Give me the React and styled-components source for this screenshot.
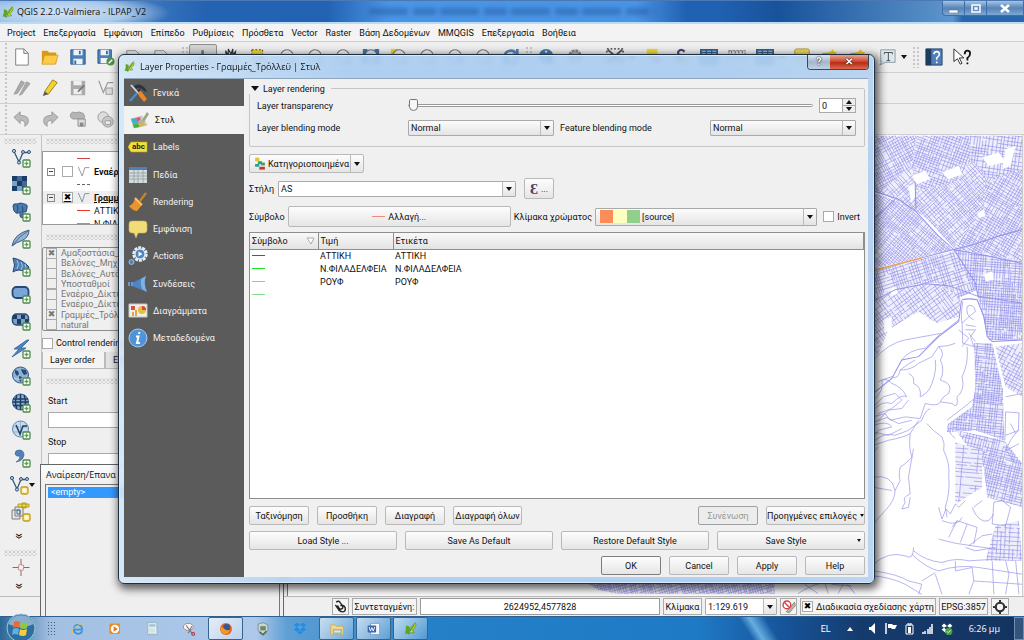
import React, { useState } from "react"
import styled, { createGlobalStyle, css } from "styled-components"

const GlobalStyle = createGlobalStyle`
* { box-sizing: border-box; }
body {
    margin: 0;
    overflow: hidden;
    font-family: Roboto, "Noto Sans", sans-serif;
    font-size: 9px;
    line-height: 12px;
    color: #111;
}
button, input, select, table {
    font: inherit;
    color: inherit;
}
button {
    padding: 0;
    border: 0;
    background: none;
}
ul {
    margin: 0;
    padding: 0;
    list-style: none;
}
svg { display: block; }
`

/* ---------- icons ---------- */

const Icon = ({ size = 20, children }) => (
    <svg width={size} height={size} viewBox="0 0 20 20" fill="none" aria-hidden="true">{children}</svg>
)

const Plus = () => <g>
    <rect x="12" y="12" width="7" height="7" rx="1" fill="#fff" stroke="#4c8a48" strokeWidth="1.3" />
    <path d="M15.5 13.5v4M13.5 15.5h4" stroke="#5f9c58" strokeWidth="1.3" />
</g>

const Star = () => <g>
    <rect x="12" y="12" width="7" height="7" rx="1.5" fill="#ffe98a" stroke="#c39a1c" strokeWidth="1.3" />
    <path d="M15.5 13.2v4.6M13.2 15.5h4.6M14 14l3 3M17 14l-3 3" stroke="#fff" strokeWidth=".8" />
</g>

const VShape = ({ color = "#31557c" }) => <g>
    <path d="M3 3.5L8 14L12 4.5H17" stroke={color} strokeWidth="1.3" />
    <circle cx="3" cy="3" r="1.6" fill="#b7d0e8" stroke={color} />
    <circle cx="8" cy="14.500" r="1.6" fill="#b7d0e8" stroke={color} />
    <circle cx="12" cy="4" r="1.5" fill="#b7d0e8" stroke={color} />
    <circle cx="18" cy="4" r="1.5" fill="#b7d0e8" stroke={color} />
</g>

const Globe = () => <circle cx="9.500" cy="9" r="8" fill="#8fb1d3" stroke="#345b86" />

const layerIcons = {
    vector: <><VShape /><Plus /></>,
    raster: <>
        <rect x="1" y="1" width="15" height="15" fill="#7ba2cb" />
        <path d="M1 1h5v5H1zM11 1h5v5h-5zM6 6h5v5H6zM1 11h5v5H1zM11 11h5v5h-5z" fill="#1f3d63" />
        <path d="M6 1h5v5H6zM11 6h5v5h-5z" fill="#3f6b9c" /><Plus />
    </>,
    postgis: <>
        <path d="M2 4Q2 1 6 2Q10 0 13 2Q17 2 16 6L15 10H12L12 15Q10 17 9 14V10Q7 12 5 11Q2 9 2 4Z" fill="#4b7cb1" stroke="#264b77" />
        <path d="M6 3Q8 6 6 10M11 4Q13 7 11 10" stroke="#264b77" /><Plus />
    </>,
    spatialite: <>
        <path d="M1 17Q3 5 18 1Q18 9 10 12Q6 13 1 17Z" fill="#93b4d3" stroke="#3e5f83" />
        <path d="M2 16Q8 7 17 2" stroke="#3e5f83" strokeWidth=".8" /><Plus />
    </>,
    mssql: <>
        <path d="M2 1Q12 3 18 10Q17 14 14 15Q8 11 2 15Q5 8 2 1Z" fill="#4c80b8" stroke="#22456f" />
        <path d="M6 3Q9 8 6 12M10 5Q13 9 10 13M14 7Q16 11 14 14" stroke="#c3d7ea" strokeWidth=".8" /><Plus />
    </>,
    oracle: <><rect x="1.500" y="3" width="16" height="11" rx="4" fill="#79a6d6" stroke="#274a75" strokeWidth="1.800" /><Plus /></>,
    georaster: <>
        <rect x="1.500" y="3" width="16" height="11" rx="4" fill="#7ba2cb" stroke="#274a75" strokeWidth="1.500" />
        <path d="M2 4h4v4H2zM10 4h4v4h-4zM6 8h4v5H6zM14 8h3v4h-3z" fill="#1f3d63" /><Plus />
    </>,
    anywhere: <><path d="M16 1L3 10H8L1 18L15 9H10L18 1Z" fill="#4d85c1" stroke="#315f94" strokeWidth=".8" /><Plus /></>,
    wms: <>
        <Globe />
        <path d="M4 4l3 1 1 3-2 2-2-3zM10 3l5 1 1 4-3 1-2-3zM8 10l3 1-1 5-2-2z" fill="#244a76" />
        <path d="M3 12q6 3 13-1" stroke="#d6e4f1" strokeWidth=".8" /><Plus />
    </>,
    wcs: <>
        <Globe />
        <path d="M2 6h15M1.500 9h16M2 12.500h15M9.500 1v16M6 2Q3 9 6 16M13 2Q16 9 13 16" stroke="#1f3d63" strokeWidth="1.500" /><Plus />
    </>,
    wfs: <>
        <circle cx="9.500" cy="9" r="8" fill="#c9dcec" stroke="#5f84ad" />
        <path d="M2 7h15M2 12h15M9.500 1v16" stroke="#8aa9c9" strokeWidth=".8" />
        <path d="M5 5L9 14L12 6H16" stroke="#1f3d63" strokeWidth="1.500" /><Plus />
    </>,
    csv: <><path d="M8 2Q4 2 4 6Q5 9 9 8Q9 12 5 14Q12 13 13 7Q13 2 8 2Z" fill="#5282b5" stroke="#315f94" strokeWidth=".6" /><Plus /></>,
    newLayer: <><VShape /><Star /></>,
    bookmark: <>
        <path d="M1 8h8v9H1zM4 5h8v9H4z" fill="#e6e6e6" stroke="#7c7c7c" />
        <path d="M6 8h3v4H6z" stroke="#3c6c9c" />
        <path d="M7 2h11v3H7zM11 1h4v5h-4z" fill="#f6dc3e" stroke="#a48d18" strokeWidth=".8" /><Star />
    </>,
}

const QLogo = ({ size = 12 }) => <Icon size={size}>
    <path d="M3 6Q8 5 9 9L7 19Q3 17 1 18Q4 12 3 6Z" fill="#5ba529" />
    <path d="M7 19Q8 9 17 1Q20 5 17 9L13 12L16 16L12 17Q10 14 7 19Z" fill="#b8d62c" stroke="#3d7c1f" strokeWidth=".8" />
    <path d="M9 14L16 4" stroke="#266916" />
</Icon>

const Lens = ({ color = "#777", fill = "#f4f4f4" }) => <>
    <circle cx="10" cy="9" r="7" fill={fill} stroke={color} strokeWidth="1.2" />
    <path d="M15 14l4 4" stroke={color} strokeWidth="2" />
</>

const fileIcons = {
    blank: <path d="M3 1h9l5 5v13H3zM12 1v5h5" fill="#fff" stroke="#777" />,
    open: <><path d="M1 3h6l2 2h8v12H1z" fill="#d99a16" /><path d="M4 8h15l-3 10H1z" fill="#fdcb48" stroke="#cf9722" strokeWidth=".8" /></>,
    save: <>
        <path d="M2 2h16v16H2z" fill="#4d7fb9" stroke="#315a8c" />
        <path d="M5 2h10v6H5zM5 12h10v6H5z" fill="#eef3f8" /><path d="M12 3v4M7 14v4" stroke="#39679e" strokeWidth="2" />
    </>,
    saveAs: <>
        <path d="M1 2h15v15H1z" fill="#4d7fb9" stroke="#315a8c" />
        <path d="M4 2h9v6H4zM4 11h9v6H4z" fill="#eef3f8" /><path d="M11 3v4" stroke="#39679e" strokeWidth="2" />
        <circle cx="15" cy="15" r="4.500" fill="#4f9445" /><path d="M13 17l4-4" stroke="#fff" strokeWidth="1.500" />
    </>,
    print: <path d="M2 3h10l4 4v12H2zM6 9h10v6H6z" fill="#eee" stroke="#888" />,
    touch: <path d="M8 10V3q2-2 3 0v7l5 1-2 8H8l-4-6z" fill="#777" />,
    hand: <path d="M4 14L2 9l3 1-1-7 3 5V1l3 6 2-6v7l3-4-1 8 3-2-5 9H7z" fill="#fff" stroke="#333" strokeWidth="1.300" />,
    panSel: <><rect x="2" y="2" width="12" height="9" fill="#f5db2e" stroke="#333" strokeDasharray="2" /><path d="M10 8l8 8M3 13l8 5" stroke="#444" strokeWidth="2" /></>,
    zoom: <Lens />,
    zoomFull: <><path d="M1 1h5v16H1zM14 1h5v16h-5z" fill="#47729f" /><Lens color="#47729f" fill="#dfe7ee" /></>,
    zoomSel: <><path d="M1 1h8v7H1z" fill="#f1d31f" /><Lens /></>,
    zoomBlue: <><Lens /><path d="M12 9h6v6h-6z" fill="#77a2cf" /></>,
    refresh: <path d="M3 10Q3 3 10 3Q14 3 15 6M17 10Q17 17 10 17Q6 17 5 14M17 1v7h-6M3 19v-7h6" stroke="#4f83bb" strokeWidth="3" />,
    info: <><circle cx="9" cy="9" r="8" fill="#447ab2" /><path d="M9 3v2M9 7v7" stroke="#fff" strokeWidth="2" /><path d="M12 12l5 5" stroke="#444" strokeWidth="2" /></>,
    gear: <circle cx="10" cy="9" r="6" fill="#bbb" stroke="#888" strokeWidth="3" strokeDasharray="3 1" />,
    select: <><path d="M2 2l16 14M18 2L2 16" stroke="#555" strokeWidth="2" /><path d="M1 1h18v14H1z" stroke="#333" strokeDasharray="2" strokeWidth="1.500" /></>,
    yellow: <><path d="M3 1h12v11H3z" fill="#f2d932" /><path d="M11 10h7v6h-7z" fill="#d0679a" /></>,
    epsilon: <><path d="M14 4Q10 0 7 4Q6 8 10 8Q4 9 6 13Q10 16 14 12" stroke="#594474" strokeWidth="2.500" /><circle cx="15" cy="14" r="4" fill="#e6d63e" /></>,
    table: <><path d="M1 2h18v15H1z" fill="#bcd0e2" stroke="#34618f" strokeWidth="2" /><path d="M1 5h18M7 2v15M13 2v15M1 11h18" stroke="#34618f" strokeWidth="1.500" /></>,
    ruler: <path d="M1 3h18v9H1zM4 3v4M8 3v4M12 3v4M16 3v4" stroke="#777" strokeWidth="1.200" strokeDasharray="3 1" />,
    tip: <path d="M2 3q0-2 2-2h12q2 0 2 2v8q0 2-2 2h-6l-4 5v-5H4q-2 0-2-2z" fill="#efd75a" stroke="#a9963c" />,
    bookmark: <><path d="M2 6h14v9H2z" fill="#ece8d8" stroke="#999" /><path d="M13 1l1 3 4 1-3 3 1 4-3-2-4 2 1-4-3-3 4-1z" fill="#edc81f" /></>,
    text: <><path d="M3 2h16v14H8l-6 3 2-4H3z" fill="#dbe8ef" stroke="#8898a0" /><path d="M7 5h9M7 5v2M16 5v2M11.500 5v9M9.500 14h4" stroke="#444" /></>,
    help: <><path d="M1 1h18v18H1z" fill="#4f7fb8" stroke="#203f66" /><path d="M1 1h6v18H1z" fill="#1e3b60" /><path d="M10 7q0-3 3-3t3 3q0 2-3 4v2M13 15v2" stroke="#fff" strokeWidth="1.800" /></>,
    whatsThis: <><path d="M1 1v14l4-3 3 6 2-1-3-6h5z" fill="#fff" stroke="#222" /><path d="M13 7q0-4 3-4t3 3-3 5v3M16 16v2" stroke="#111" strokeWidth="2" /></>,
}

const greyIcons = {
    pens: <><path d="M1 17L9 2l4 2L5 16zM7 18L15 3l4 2L10 17z" fill="#aaa" stroke="#8a8a8a" strokeWidth=".6" /></>,
    pencil: <><path d="M4 14L13 1l5 3L8 17z" fill="#f4d22e" stroke="#907a1d" /><path d="M4 14l-2 5 6-2z" fill="#555" /></>,
    saveEdit: <><path d="M2 2h16v16H2z" fill="#aaa" /><path d="M5 2h9v5H5zM5 11h9v6H5z" fill="#eee" /><path d="M10 14l7-7" stroke="#777" strokeWidth="2" /></>,
    feature: <><path d="M2 2l5 13 5-11h6" stroke="#999" strokeWidth="1.300" /><rect x="10" y="10" width="7" height="7" fill="#ddd" stroke="#999" /></>,
    undo: <path d="M1 8l7-6v4q10 0 9 7 0 3-4 5 2-6-5-7v4z" fill="#bbb" stroke="#999" />,
    redo: <path d="M19 8l-7-6v4Q2 6 3 13q0 3 4 5-2-6 5-7v4z" fill="#bbb" stroke="#999" />,
    blob: <><path d="M2 4q2-3 5-1 5-2 9 1 3 4 0 6H4Q0 8 2 4z" fill="#b5b5b5" stroke="#999" /><path d="M10 10h8v8h-8z" fill="#ddd" stroke="#888" /><path d="M12 14h4v4h-4z" fill="#888" /></>,
    rings: <><circle cx="7" cy="8" r="6" fill="#ddd" stroke="#999" /><circle cx="12" cy="13" r="6" fill="#c9c9c9" stroke="#999" /><path d="M9 12h6v4H9z" fill="#eee" stroke="#999" /></>,
}

const sideIcons = {
    general: <>
        <path d="M6 3Q11 -1 17 5L19 9L16 8Q12 3 8 6z" fill="#29343e" /><path d="M12 6L3 17" stroke="#29343e" strokeWidth="2" />
        <path d="M3 2l8 9" stroke="#cfd9e0" strokeWidth="1.800" /><path d="M10 9l3-1 6 8-3 3-5-6z" fill="#ee8423" />
        <path d="M9 10L2 18" stroke="#4a90cf" strokeWidth="2.500" />
    </>,
    style: <>
        <path d="M1 9l11-3 5 9-13 3z" fill="#dcd3c6" stroke="#b7b1a5" strokeWidth=".6" />
        <path d="M1 9l5-1 2 5-5 1z" fill="#3bb3c9" /><path d="M6 8l4-1 2 5-4 1z" fill="#d95776" />
        <path d="M3 14l5-1 2 4-6 1z" fill="#4bb04b" /><path d="M8 13l5-1 3 3-6 2z" fill="#d9b93c" />
        <path d="M12 10l5-8 2 2-5 8z" fill="#98a883" /><path d="M10 9l5 3-3 3-4-3z" fill="#b3b39f" />
    </>,
    labels: <><path d="M0 10l3-5h16v10H3z" fill="#f3e03a" stroke="#b9a716" strokeWidth=".6" /></>,
    fields: <><path d="M1 2h18v16H1z" fill="#d5dbdb" /><path d="M1 2h18v3H1z" fill="#4f7fb8" /><path d="M1 8h18M1 11h18M1 14h18M6 5v13M10 5v13M15 5v13" stroke="#8f9ea1" strokeWidth=".8" /></>,
    rendering: <><path d="M12 9l6-8" stroke="#c98328" strokeWidth="2.200" /><path d="M7 6l7 7-5 6q-4 0-8-5 5-2 6-8z" fill="#e9952e" /><path d="M7 6l7 7" stroke="#fbc06b" strokeWidth="2" /></>,
    display: <path d="M1 5q0-3 3-3h12q3 0 3 3v6q0 3-3 3h-6l-2 5-2-5H4q-3 0-3-3z" fill="#f1dd78" stroke="#c9b654" strokeWidth=".6" />,
    actions: <>
        <circle cx="12" cy="8" r="6.500" fill="#4f86c0" stroke="#e8edf1" strokeWidth="2.500" strokeDasharray="3 1" />
        <circle cx="12" cy="8" r="5" fill="#4f86c0" stroke="#fff" /><path d="M10.500 5.500l4 2.500-4 2.500z" fill="#fff" />
        <circle cx="3.500" cy="16" r="2.500" fill="#4f86c0" stroke="#9dbbd9" />
    </>,
    joins: <><path d="M4 9L18 2Q15 9 19 18L4 12z" fill="#4a86c6" /><path d="M13 5l5-3Q15 9 19 18l-5-3Q12 10 13 5z" fill="#7fb0e0" /><path d="M0 8h2v4H0zM3 8h2v4H3z" fill="#5f9bd8" /></>,
    diagrams: <>
        <path d="M1 3h18v13H1z" fill="#eeeeea" stroke="#c7c7c3" /><path d="M3 5h4v4H3z" fill="#db5141" />
        <path d="M4 11h2v4H4zM7 9h2v6H7z" fill="#e8a43f" /><circle cx="14" cy="9" r="4" fill="#e2c13e" /><path d="M14 9V5a4 4 0 0 1 4 4z" fill="#d64a3e" />
    </>,
    metadata: <><circle cx="10" cy="10" r="9" fill="#4f93d8" stroke="#a8cdf0" /><path d="M11.500 4l-.5 2M8 8.500h2.500L9 15h3" stroke="#fff" strokeWidth="2" /></>,
}

const trayIcons = {
    ie: <><path d="M16 13q-2 4-6 4-6-1-6-7 1-6 6-6 6 1 6 7H5" stroke="#3794de" strokeWidth="2.600" /><path d="M2 16Q0 11 8 6q8-5 10-3" stroke="#f0c13b" strokeWidth="1.300" /></>,
    media: <><rect x="2" y="2" width="15" height="15" rx="2" fill="#e98c20" /><circle cx="10" cy="10" r="6" fill="#fff" /><path d="M8 6l6 4-6 4z" fill="#e57a10" /></>,
    calc: <><path d="M4 1h13v17H4z" fill="#e9f3f4" stroke="#87a9b5" /><path d="M6 3h9v4H6z" fill="#a8c9cf" /><path d="M6 10h9M6 13h9M6 16h9" stroke="#9ab4bc" strokeDasharray="2 1" /></>,
    snip: <><ellipse cx="9" cy="7" rx="7" ry="5" fill="#f6f6f6" stroke="#c35a55" /><path d="M6 5l9 12M14 6L9 16" stroke="#677" strokeWidth="1.500" /><circle cx="16" cy="17" r="2" stroke="#b33" strokeWidth="1.500" /></>,
    firefox: <><circle cx="10" cy="10" r="8.500" fill="#e0661b" /><circle cx="11" cy="8" r="5" fill="#31599c" /><path d="M2 7q4 0 6 3 3 3 8 1-2 6-8 6T2 7z" fill="#f39a24" /></>,
    shield: <><path d="M3 3l7-2 7 3v7q-2 6-7 8-5-2-7-8z" fill="#cfd6cf" stroke="#6f7d74" /><path d="M6 6h8v6H6z" fill="#5f8f6d" /><path d="M5 14l5 4 5-5" stroke="#4f6657" strokeWidth="2" /></>,
    dropbox: <path d="M6 1l4 3-5 3-4-3zM14 1l5 3-4 3-5-3zM5 7l5 4-4 3-5-3zM15 7l4 4-5 3-4-3zM10 12l4 3-4 3-4-3z" fill="#258be0" />,
    folder: <><path d="M1 4h6l2 2h10v12H1z" fill="#f3d985" stroke="#c5a551" /><path d="M4 10h13v8H4z" fill="#8cb8dd" /><path d="M6 12h9v3H6z" fill="#f7e5a5" /></>,
    word: <><path d="M5 2h13v16H5z" fill="#f3f7fb" stroke="#6d8fba" /><rect x="1" y="5" width="12" height="10" rx="1" fill="#3765ac" /><path d="M3 7l2 6 2-5 2 5 2-6" stroke="#fff" strokeWidth="1.300" /></>,
}

/* ---------- main window ---------- */

const Window = styled.div`
position: relative;
display: flex;
flex-direction: column;
height: 100vh;
background: #efefef;
`

const TitleBar = styled.header`
display: flex;
align-items: center;
height: 24px;
padding-left: 2px;
font-family: "Open Sans", sans-serif;
border-top: 1px solid #4b79b4;
border-bottom: 2px solid #b8dcf8;
background:
    radial-gradient(ellipse 110px 20px at 60px 12px, #d3e4f4 0, #a9c9ea 60%, transparent 100%),
    linear-gradient(90deg, transparent 32%, #4a94e6 38%, #4a94e6 62%, transparent 67%),
    linear-gradient(90deg, #79a9d9 0, #2463b2 20%, #2161b3 70%, #18529a 76%, #5e95cc 93%, #2a66ab 94%);
`

const WindowTitle = styled.h1`
flex: 1;
margin: 0 0 0 3px;
font-size: 9px;
font-weight: 400;
`

const GhostTitle = styled.div`
position: absolute;
left: 36%;
top: 8px;
width: 28%;
height: 7px;
background: repeating-linear-gradient(90deg, #245a9e 0 38px, transparent 40px 43px, #245a9e 45px 66px, transparent 68px 71px);
filter: blur(2px);
opacity: .5;
`

const WindowButtons = styled.div`
display: flex;
align-self: flex-start;
height: 15px;
border: 1px solid #3f6fa5;
border-top: 0;
border-right: 0;
border-radius: 0 0 0 4px;
background: linear-gradient(#a7c5e4, #5784b6 50%, #7ca8d5);
`

const WindowButton = styled.button`
display: grid;
place-items: center;
width: ${props => props.$wide ? 37 : 22}px;
border-right: 1px solid #3f6fa5;
`

const MenuBar = styled.nav`
display: flex;
align-items: center;
gap: 8px;
height: 18px;
padding-left: 7px;
background: #f3f3f3;
border-bottom: 1px solid #cfcfcf;
`

const MenuItem = styled.button`
white-space: nowrap;
`

const ToolBar = styled.div`
display: flex;
align-items: center;
height: 31px;
padding-left: 8px;
border-bottom: 1px solid #cfcfcf;
background: radial-gradient(circle, #c6c6c6 1px, transparent 1px) 4px 0 / 4px 4px repeat-y, #efefef;
`

const ToolButton = styled.button`
display: grid;
flex: none;
place-items: center;
width: 28px;
height: 26px;
border-radius: 2px;
${props => props.$pressed && css`
background: #d4d4d4;
border: 1px solid #8f8f8f;
`}
`

const Spacer = styled.span`
flex: none;
width: ${props => props.$w}px;
`

const Filler = styled.span`
flex: 1;
`

const Grip = styled.span`
flex: none;
width: 8px;
height: 22px;
background: radial-gradient(circle, #c6c6c6 1px, transparent 1px) 0 0 / 4px 4px;
`

const Caret = styled.span`
flex: none;
align-self: center;
justify-self: center;
border: ${props => props.$s || 3}px solid transparent;
border-top: ${props => props.$s ? props.$s + 1 : 4}px solid #111;
border-bottom: 0;
`

const HandleRow = styled.div`
flex: none;
align-self: stretch;
height: 6px;
margin: ${props => props.$m || "0 4px"};
background: radial-gradient(circle, #cdcdcd 1px, transparent 1px) 0 0 / 4px 4px, radial-gradient(circle, #dcdcdc 1px, transparent 1px) 2px 2px / 4px 4px;
`

const Workspace = styled.div`
display: flex;
flex: 1;
min-height: 0;
`

const LayerTools = styled.div`
display: flex;
flex: none;
flex-direction: column;
align-items: center;
width: 42px;
padding-top: 3px;
border-right: 1px solid #c2c2c2;
`

const LayerToolGrid = styled.div`
display: grid;
flex: none;
grid-auto-rows: 1fr;
height: 382px;
`

const LayerTool = styled.button`
display: flex;
align-items: center;
justify-content: center;
width: 40px;
`

const More = styled.button`
flex: none;
height: 20px;
font-size: 14px;
line-height: 10px;
transform: rotate(90deg);
`

const Docks = styled.div`
display: flex;
flex: none;
flex-direction: column;
width: 242px;
padding-top: 3px;
`

const LayerTree = styled.ul`
height: 74px;
overflow: hidden;
background: #fff;
border: 1px solid #999;
`

const TreeRow = styled.li`
display: flex;
align-items: center;
gap: 4px;
height: 13px;
padding-left: ${props => props.$leaf ? 25 : 4}px;
white-space: nowrap;
background: ${props => props.$active ? "#eee" : "none"};
font-weight: ${props => props.$leaf ? 400 : 700};
text-decoration: ${props => props.$active ? "underline" : "none"};
`

const Expander = styled.span`
display: grid;
place-items: center;
width: 8px;
height: 8px;
margin-right: 3px;
border: 1px solid #888;
&::after {
    content: "";
    width: 4px;
    height: 1px;
    background: #444;
}
`

const Line = styled.span`
flex: none;
width: 13px;
height: 1px;
background: ${props => props.$dashed
    ? `repeating-linear-gradient(90deg, ${props.$color} 0 3px, transparent 3px 5px)`
    : props.$color};
`

const Check = styled.input`
appearance: none;
flex: none;
display: grid;
place-items: center;
width: 11px;
height: 11px;
margin: 0;
border: 1px solid #aaa;
background: ${props => props.disabled ? "#eee" : "#fff"};
&:checked::after {
    content: "✖";
    font: 9px/9px "DejaVu Sans", sans-serif;
    color: ${props => props.disabled ? "#777" : "#000"};
}
`

const OrderList = styled.ul`
display: grid;
flex: none;
grid-auto-rows: 1fr;
height: 84px;
overflow: hidden;
border: 1px solid #8c8c8c;
border-radius: 2px;
color: #777;
padding-left: 3px;
`

const OrderLabel = styled.label`
display: flex;
align-items: center;
gap: 4px;
height: 10px;
font-size: 9px;
white-space: nowrap;
`

const ControlLabel = styled(OrderLabel)`
gap: 3px;
height: 12px;
margin-top: 6px;
`

const Tabs = styled.div`
display: flex;
flex: none;
height: 17px;
margin-top: 3px;
`

const Tab = styled.button`
padding: 0 9px 0 7px;
border: 1px solid #bbb;
border-top: 0;
background: ${props => props.$active ? "#f4f4f4" : "#e2e2e2"};
`

const Fields = styled.div`
display: flex;
flex-direction: column;
gap: 5px;
padding: 11px 8px 0 6px;
label + input { margin-bottom: 3px; }
`

const TextField = styled.input`
width: 100%;
height: 16px;
border: 1px solid #aaa;
background: #fff;
`

const UndoDock = styled.section`
position: absolute;
left: 40px;
top: 464px;
bottom: 24px;
display: flex;
flex-direction: column;
width: 244px;
padding: 3px 3px 0 4px;
border: 1px solid #666;
border-bottom: 0;
background: linear-gradient(#fafcfe, #efefef 20px);
`

const DockTitle = styled.h2`
margin: 0 0 3px 1px;
font: 400 9px/13px "Open Sans", sans-serif;
`

const UndoList = styled.ul`
flex: 1;
padding: 2px;
border: 1px solid #777;
border-bottom: 0;
li {
    height: 11px;
    padding-left: 3px;
    line-height: 11px;
    color: #fff;
    background: #3399ff;
}
`

const MapFrame = styled.main`
flex: 1;
min-width: 0;
margin: 0 1px 0 3px;
border-left: 1px solid #777;
border-right: 1px solid #ccc;
background: #fff;
svg {
    width: 100%;
    height: 100%;
}
`

const StatusBar = styled.footer`
display: flex;
flex: none;
align-items: center;
justify-content: flex-end;
gap: 3px;
height: 20px;
padding-right: 15px;
border-top: 1px solid #bbb;
`

const StatusBox = styled.div`
display: flex;
align-items: center;
justify-content: center;
flex: none;
gap: 4px;
width: ${props => props.$w ? props.$w + "px" : "auto"};
height: 17px;
padding: 0 1px;
border: 1px solid #aaa;
background: #f4f4f4;
white-space: nowrap;
`

const StatusButton = styled(StatusBox).attrs({ as: "button" })`
padding: 0;
`

const CoordField = styled.input`
flex: 0 1 240px;
height: 17px;
min-width: 0;
border: 1px solid #999;
text-align: center;
background: #fff;
`

const StatusCheck = styled.label`
display: flex;
align-items: center;
gap: 3px;
`

/* ---------- taskbar ---------- */

const TaskBar = styled.div`
display: flex;
flex: none;
align-items: center;
height: 24px;
padding-left: 47px;
color: #fff;
border-top: 1px solid #2f5f8f;
background:
    linear-gradient(58deg, transparent 72.5%, #67aee0 73.5%, transparent 75%),
    linear-gradient(90deg, #2c6797 0, #a3c0e2 5%, #adc8ea 25%, #5f9fd4 28%, #2580c8 42%, #1f7ac6 68%, #17569d 76%, #153b6d 84%, #14335f 100%);
`

const TaskGrip = styled.span`
width: 8px;
height: 16px;
margin-right: 5px;
background: radial-gradient(circle, #3c5f86 1px, transparent 1px) 0 0 / 3px 3px;
`

const StartOrb = styled.button`
position: absolute;
left: 6px;
bottom: 0;
width: 30px;
height: 27px;
`

const TaskButton = styled.button`
display: grid;
place-items: center;
width: 35px;
height: 23px;
margin-right: 2px;
border: 1px solid ${props => props.$open ? "#35648f" : "transparent"};
border-radius: 2px;
background: ${props => props.$open ? "linear-gradient(135deg, #ffffffb0, #ffffff30)" : "none"};
`

const Tray = styled.div`
display: flex;
align-items: center;
gap: 8px;
margin-left: auto;
font-size: 9px;
`

const Clock = styled.time`
margin: 0 6px 0 8px;
font: 9px/12px "Open Sans", sans-serif;
white-space: nowrap;
`

const ShowDesktop = styled.button`
width: 10px;
height: 23px;
border: 1px solid #6f8fb0;
background: #35547c;
`

/* ---------- dialog ---------- */

const Dialog = styled.section`
position: absolute;
left: 118px;
right: 149px;
top: 54px;
bottom: 56px;
display: flex;
flex-direction: column;
padding: 0 6px 6px 5px;
border: 1px solid #1f2f3f;
border-radius: 6px;
background: linear-gradient(90deg, #d3e6f8e6, #a9ccf0e6 30%, #a9ccf0e6 80%, #b4d1f0e6);
backdrop-filter: blur(2px);
box-shadow: inset 0 0 0 1px #d8eafc, 2px 3px 9px 2px #000000a0;
`

const DialogTitle = styled.header`
display: flex;
flex: none;
align-items: center;
gap: 5px;
height: 23px;
`

const DialogHeading = styled.h2`
flex: 1;
margin: 0;
font: 400 9px/14px "Open Sans", sans-serif;
`

const DialogControls = styled.div`
display: flex;
align-self: flex-start;
height: 15px;
margin-right: -1px;
border: 1px solid #3a4753;
border-top: 0;
border-radius: 0 0 4px 4px;
overflow: hidden;
`

const DialogControl = styled.button`
display: grid;
place-items: center;
width: ${props => props.$close ? 38 : 22}px;
font-weight: 700;
font-size: 10px;
color: #fff;
text-shadow: 0 0 2px #222, 0 0 1px #222;
background: ${props => props.$close
    ? "linear-gradient(#e6a497, #cf4a33 45%, #b92b14 55%, #dc6a4c)"
    : "linear-gradient(#d9e6f2, #a3b6c9 50%, #bfd3e8)"};
`

const DialogBody = styled.div`
display: flex;
flex: 1;
min-height: 0;
background: #f0f0f0;
border: solid #8fa5bb;
border-width: 1px 0 0;
`

const SideBar = styled.nav`
flex: none;
width: 120px;
background: #5b5b5b;
`

const SideList = styled.ul`
display: grid;
grid-auto-rows: 1fr;
height: 273px;
li { display: grid; }
`

const SideItem = styled.button`
display: flex;
align-items: center;
gap: 5px;
padding-left: ${props => props.$active ? 6 : 4}px;
color: ${props => props.$active ? "#222" : "#f2f2f2"};
background: ${props => props.$active ? "#f2f2f2" : "none"};
text-align: left;
`

const LabelsMark = styled.span`
display: grid;
position: relative;
b {
    position: absolute;
    left: 4px;
    top: 4px;
    font-size: 8px;
    line-height: 11px;
    color: #222;
}
`

const Content = styled.div`
display: flex;
flex: 1;
flex-direction: column;
min-width: 0;
padding: 4px 3px 2px 5px;
`

const Group = styled.fieldset`
min-width: 0;
height: 64px;
margin: 0;
padding: 4px 8px 0 7px;
border: 1px solid #c6c6c6;
border-radius: 2px;
legend {
    display: flex;
    align-items: center;
    gap: 4px;
    height: 11px;
    margin-left: -8px;
    padding: 0 6px 0 2px;
}
`

const GroupGrid = styled.div`
display: grid;
grid-template-columns: 151px 146px 156px 1fr;
align-items: center;
row-gap: 7px;
`

const FeatureLabel = styled.label`
padding-left: 6px;
white-space: nowrap;
`

const Slider = styled.input`
appearance: none;
width: 100%;
height: 14px;
margin: 0;
background: none;
&::-webkit-slider-runnable-track {
    height: 3px;
    border: 1px solid #999;
    border-radius: 2px;
    background: #fff;
}
&::-webkit-slider-thumb {
    appearance: none;
    width: 9px;
    height: 12px;
    margin-top: -6px;
    border: 1px solid #777;
    border-radius: 2px 2px 5px 5px;
    background: #f6f6f6;
}
`

const SliderCell = styled.div`
display: flex;
grid-column: 2 / 5;
align-items: center;
gap: 6px;
`

const Spin = styled.div`
display: flex;
flex: none;
width: 37px;
height: 15px;
border: 1px solid #aaa;
background: #fff;
input {
    flex: 1;
    min-width: 0;
    padding: 0 2px;
    border: 0;
    appearance: textfield;
}
input::-webkit-inner-spin-button { display: none; }
`

const SpinButtons = styled.div`
display: grid;
grid-template-rows: 1fr 1fr;
width: 13px;
border-left: 1px solid #aaa;
background: #eee;
button { display: grid; place-items: center; }
button:first-child { border-bottom: 1px solid #aaa; }
button:first-child span { transform: rotate(180deg); }
`

const Combo = styled.span`
display: flex;
flex: ${props => props.$w ? "0 0 " + props.$w + "px" : "1"};
min-width: 0;
height: ${props => props.$h || 16}px;
border: 1px solid #aaa;
border-radius: 1px;
background: ${props => props.$white ? "#fff" : "linear-gradient(#fcfcfc, #e4e4e4)"};
select {
    appearance: none;
    flex: 1;
    min-width: 0;
    padding: 0 2px;
    border: 0;
    background: none;
}
`

const ComboArrow = styled.span`
display: grid;
place-items: center;
width: 13px;
border-left: 1px solid #bbb;
background: linear-gradient(#fcfcfc, #e4e4e4);
pointer-events: none;
`

const Ramp = styled.span`
align-self: center;
flex: none;
width: 40px;
height: 13px;
margin-left: 4px;
background: linear-gradient(90deg, #fc8d59 0 33%, #ffffbf 33% 67%, #91cf8c 67%);
`

const Button = styled.button`
display: flex;
align-items: center;
justify-content: center;
gap: 3px;
flex: ${props => props.$w ? "0 0 " + props.$w + "px" : "1 1 0"};
height: ${props => props.$h || 19}px;
border: 1px solid ${props => props.$default ? "#7d7d7d" : "#b9b9b9"};
border-radius: 2px;
background: linear-gradient(#fdfdfd, #e5e5e5);
white-space: nowrap;
&:disabled {
    color: #999;
    background: #ececec;
    border-color: #a0a0a0;
}
`

const MenuButton = styled(Button)`
span:first-child { flex: 1; }
span:last-child { margin-right: 3px; }
`

const RendererButton = styled(Button)`
gap: 0;
> span:last-child {
    display: grid;
    place-items: center;
    align-self: stretch;
    width: 13px;
    border-left: 1px solid #bbb;
}
`

const RendererName = styled.span`
flex: 1;
`

const Row = styled.div`
display: flex;
align-items: center;
justify-content: ${props => props.$end ? "flex-end" : "flex-start"};
gap: ${props => props.$gap || 4}px;
margin-top: ${props => props.$mt || 7}px;
`

const SymbolRow = styled(Row)`
gap: 3px;
padding-right: 5px;
`

const FieldLabel = styled.label`
white-space: nowrap;
`

const Epsilon = styled.span`
font: 700 15px/14px "Liberation Serif", serif;
color: #4e3a66;
`

const TableFrame = styled.div`
flex: 1;
min-height: 0;
margin-top: 5px;
border: 1px solid #8e8e8e;
background: #fff;
`

const ClassTable = styled.table`
width: 100%;
border-collapse: collapse;
table-layout: fixed;
th {
    height: 16px;
    padding: 0 3px 0 2px;
    border: 1px solid #8e8e8e;
    border-width: 0 1px 1px 0;
    text-align: left;
    font-weight: 400;
    background: linear-gradient(#f8f8f8, #e3e3e3);
}
th:nth-child(1) { width: 68px; }
th:nth-child(2) { width: 75px; }
th div {
    display: flex;
    align-items: center;
    justify-content: space-between;
}
td {
    height: 13px;
    padding: 0 3px 0 2px;
    line-height: 12px;
}
td span { display: block; }
`

/* ---------- street map ---------- */

const seeded = seed => () => {
    seed = (seed * 16807) % 2147483647
    return seed / 2147483647
}

// broken parallel streets in two directions around the centre of a district
const streets = ({ cx, cy, r, angle, step, cross, seed }) => {
    const rand = seeded(seed)
    let d = ""
    ;[[angle, step], [angle + 90, cross]].forEach(([deg, gap]) => {
        const a = deg * Math.PI / 180
        const c = Math.cos(a)
        const s = Math.sin(a)
        for (let u = -r; u < r; u += gap * (0.7 + rand() * 0.6)) {
            let v = -r + rand() * 30
            while (v < r) {
                const len = 20 + rand() * 90
                if (rand() > 0.1) {
                    d += `M${Math.round(cx + v * c - u * s)} ${Math.round(cy + v * s + u * c)}L${Math.round(cx + (v + len) * c - u * s)} ${Math.round(cy + (v + len) * s + u * c)}`
                }
                v += len + rand() * 10
            }
        }
    })
    return d
}

const districts = [
    { area: "-20,20 175,20 160,110 120,180 60,190 -20,180", cx: 80, cy: 110, r: 170, angle: 62, step: 7, cross: 8, seed: 11 },
    { area: "175,20 330,20 340,90 290,160 170,185 160,110", cx: 250, cy: 100, r: 150, angle: 20, step: 8, cross: 9, seed: 23 },
    { area: "330,20 490,20 490,130 380,150 335,95", cx: 410, cy: 80, r: 130, angle: 8, step: 9, cross: 11, seed: 5 },
    { area: "60,190 160,110 175,185 290,160 340,95 390,150 375,240 285,355 200,265 150,230", cx: 230, cy: 230, r: 220, angle: 48, step: 7, cross: 9, seed: 37 },
    { area: "380,150 490,120 490,395 285,358 375,240", cx: 400, cy: 260, r: 180, angle: 30, step: 8, cross: 8, seed: 41 },
    { area: "-20,190 60,195 150,230 200,280 280,360 40,420 -20,430", cx: 120, cy: 320, r: 210, angle: 40, step: 7, cross: 7, seed: 53 },
    { area: "40,425 285,365 355,480 300,505 240,460 150,465 40,510", cx: 200, cy: 430, r: 190, angle: 72, step: 8, cross: 10, seed: 61 },
    { area: "40,510 150,467 240,463 305,505 300,560 235,580 180,545 90,600 60,670 40,685", cx: 160, cy: 560, r: 180, angle: 54, step: 9, cross: 12, seed: 73 },
    { area: "285,360 490,395 490,630 390,630 355,490", cx: 410, cy: 500, r: 160, angle: 4, step: 8, cross: 7, seed: 89 },
    { area: "345,640 400,640 432,780 436,930 350,900 265,905 270,880 340,830 350,770", cx: 370, cy: 770, r: 180, angle: 6, step: 7, cross: 8, seed: 97 },
    { area: "410,650 490,640 490,800 440,770", cx: 450, cy: 710, r: 100, angle: 28, step: 10, cross: 11, seed: 101 },
    { area: "290,900 436,930 490,1000 490,1130 385,1100 375,1010", cx: 410, cy: 1000, r: 140, angle: 14, step: 8, cross: 8, seed: 113 },
    { area: "290,935 370,960 370,1070 290,1120", cx: 330, cy: 1020, r: 100, angle: 5, step: 12, cross: 36, seed: 127 },
    { area: "410,1185 480,1170 490,1290 380,1290", cx: 440, cy: 1235, r: 80, angle: 3, step: 12, cross: 12, seed: 131 },
    { area: "-819,1350 -250,1350 -250,1388 -720,1388 -780,1375", cx: -530, cy: 1370, r: 300, angle: 74, step: 6, cross: 9, seed: 139 },
]

const parks = [
    "160,140 200,125 215,150 175,165", "370,85 420,70 440,100 390,110", "250,130 300,110 310,135 270,150",
    "150,170 170,165 172,200 158,220", "375,435 400,425 405,450 380,455", "75,570 100,560 100,600 78,610",
    "440,60 470,50 455,110 430,120", "355,250 375,240 380,260 362,265", "95,480 110,470 120,490 100,500",
]

const avenues = [
    "M45 185L120 210L170 245L240 320L285 360L350 460L358 500",
    "M45 422L190 385L285 360L380 378L490 402", "M45 515L110 480L200 462L270 468L358 500L490 520",
    "M170 160L172 240", "M45 270L110 210", "M285 360L345 345L420 320L490 300",
    "M310 510Q330 505 355 510L375 560L385 620L400 635L490 630",
    "M45 790L100 745L130 690L180 680L240 620L300 575L308 512",
]

const roads = [
    "M312 515Q305 560 310 580Q330 560 350 545Q345 520 325 530Q320 560 345 570M310 580L312 640L345 650L335 620L350 600L320 600",
    "M45 690Q90 640 140 630L250 610L300 570M130 690Q150 660 200 655L245 612",
    "M45 810Q80 780 70 750L100 740Q120 750 125 720Q150 700 170 690M125 720Q160 720 180 700L220 680L240 650Q270 650 290 640",
    "M240 650Q260 670 245 690Q260 720 245 750Q285 760 270 790Q250 800 245 815L280 820Q300 840 295 800Q320 780 310 740Q330 700 325 650",
    "M150 730Q170 740 165 760Q190 770 185 800Q210 790 220 760Q235 720 230 690",
    "M45 840Q70 810 100 820Q130 790 145 800Q130 770 100 760Q85 740 60 755M45 860L80 850L95 870L140 860L185 865L200 820Q240 830 245 815",
    "M45 885Q90 870 100 890L60 900L45 920M50 930Q80 905 110 915L150 900L190 870Q200 840 215 835",
    "M45 945L90 930Q140 920 155 910Q150 950 160 980L140 1000L125 1010Q120 1040 125 1050L110 1080",
    "M155 910L180 870M205 880Q220 900 250 920Q260 940 255 960Q275 1000 270 1040Q275 1080 260 1130L265 1160",
    "M45 965L60 950M45 1040Q100 1030 110 1080Q110 1110 80 1140L45 1180M45 1070L100 1080",
    "M165 955L150 1040L155 1090Q130 1100 140 1115L130 1135L150 1130L155 1100",
    "M240 1130L250 1165L262 1135L275 1150L290 1120L300 1130L320 1110",
    "M265 870L330 820Q345 800 370 805M270 880Q260 900 290 925",
    "M45 830L75 800L110 790L130 810L100 835L60 850M50 875L85 862L120 880L160 870M45 905L90 915L130 895M60 870L90 840L130 835L150 810",
    "M300 600L330 625L310 650M320 585L350 590M330 610L350 635",
    "M45 1300Q90 1260 140 1275Q165 1290 165 1250M160 1270Q200 1310 240 1320Q300 1300 360 1310L490 1330",
    "M45 1320Q120 1330 150 1350L190 1360L180 1390M165 1260Q200 1290 250 1295Q290 1280 330 1290L410 1285M45 1335Q100 1340 140 1360L190 1390",
    "M240 1225Q290 1240 340 1245L410 1255M270 1220L295 1170L355 1190L345 1240M295 1170L280 1190M325 1180L305 1235",
    "M340 1130Q360 1180 390 1170L405 1150M405 1115L400 1180L440 1185L455 1130L430 1110L405 1115M345 1130L370 1110",
    "M250 1170Q300 1190 310 1160M320 1250L350 1260L410 1250M330 1245L370 1215L400 1210",
    "M290 1290L290 1320L340 1310L345 1350L330 1390M400 1290L405 1390M440 1290L450 1330L440 1390M230 1330L250 1390M190 1350L230 1325M345 1350L490 1360M470 1290L480 1390",
    "M440 845L480 848L478 900Q450 930 442 960L470 1000M440 845L438 930M455 880L470 910M480 900L440 915M442 960L480 940M440 800L490 790",
    "M-180 1388Q-140 1360 -100 1355L-90 1388M-60 1388L-40 1350L-10 1388M-160 1360L-120 1388M-80 1360L-20 1365",
]

const StreetMap = () => (
    <svg viewBox="0 0 735 459" preserveAspectRatio="xMaxYMin slice" role="img" aria-label="Street map">
        <g transform="translate(572 -6) scale(.33333)" fill="none" stroke="#9391ea">
            {districts.map((d, i) => <g key={d.seed}>
                <clipPath id={`district${i}`}><polygon points={d.area} /></clipPath>
                <polygon points={d.area} fill="#eeeefc" stroke="none" />
                <path d={streets(d)} clipPath={`url(#district${i})`} strokeWidth="2" />
            </g>)}
            {parks.map(p => <polygon key={p} points={p} fill="#fff" stroke="none" />)}
            {avenues.map(p => <path key={p} d={p} strokeWidth="3" />)}
            {roads.map(p => <path key={p} d={p} strokeWidth="2" strokeLinejoin="round" />)}
            <path d="M30 427L190 385" stroke="#f2a13c" strokeWidth="4" />
        </g>
    </svg>
)

/* ---------- content ---------- */

const menus = ["Project", "Επεξεργασία", "Εμφάνιση", "Επίπεδο", "Ρυθμίσεις", "Πρόσθετα", "Vector", "Raster", "Βάση Δεδομένων", "MMQGIS", "Επεξεργασία", "Βοήθεια"]

// a number is empty space, "grip" a handle, "caret" a drop-down arrow
const mainTools = ["blank", "open", "save", "saveAs", "print", "print", 5, "grip", "touch", "hand", "panSel", "zoom", "zoom", "zoom", "zoomFull", "zoomSel", "zoom", "zoomBlue", "zoom", "refresh", "grip", "info", "gear", 12, "select", "caret", 4, "yellow", "epsilon", "table", "ruler", "table", "caret", 3, "tip", "bookmark", "bookmark", 1, "text", "caret", 5, "grip", "help", "whatsThis"]

const order = [
    ["Αμαξοστάσια_Τ", true], ["Βελόνες_Μηχα", false], ["Βελόνες_Αυτόμ", false], ["Υποσταθμοί", false],
    ["Εναέριο_Δίκτυο", false], ["Εναέριο_Δίκτυα", false], ["Γραμμές_Τρόλ", true], ["natural", false],
]

const pages = [
    ["general", "Γενικά"], ["style", "Στυλ"], ["labels", "Labels"], ["fields", "Πεδία"], ["rendering", "Rendering"],
    ["display", "Εμφάνιση"], ["actions", "Actions"], ["joins", "Συνδέσεις"], ["diagrams", "Διαγράμματα"], ["metadata", "Μεταδεδομένα"],
]

const classes = [["#e02020", "ΑΤΤΙΚΗ"], ["#20e020", "Ν.ΦΙΛΑΔΕΛΦΕΙΑ"], ["#f5a83c", "ΡΟΥΦ"], ["#86dd90", ""]]

const tasks = [["ie"], ["media"], ["calc"], ["snip"], ["firefox", true], ["shield"], ["dropbox"], ["folder", true], ["word", true], ["qgis", true]]

const Select = ({ id, value, children, ...rest }) => (
    <Combo {...rest}>
        {children}
        <select id={id} aria-label={id}><option>{value}</option></select>
        <ComboArrow><Caret /></ComboArrow>
    </Combo>
)

const TreeLayer = ({ name, active, color }) => (
    <TreeRow $active={active}>
        <Expander />
        <Check type="checkbox" defaultChecked={active} aria-label={name} />
        <Icon size={13}><path d="M2 3l6 14 4-13h7" stroke={color} strokeWidth="1.500" /></Icon>
        {name}
    </TreeRow>
)

function LayerProperties() {
    const [page, setPage] = useState("style")
    return <Dialog role="dialog" aria-label="Layer Properties">
        <DialogTitle>
            <QLogo size={11} />
            <DialogHeading>Layer Properties - Γραμμές_Τρόλλεϋ | Στυλ</DialogHeading>
            <DialogControls>
                <DialogControl>?</DialogControl>
                <DialogControl $close aria-label="Close">✕</DialogControl>
            </DialogControls>
        </DialogTitle>
        <DialogBody>
            <SideBar>
                <SideList>
                    {pages.map(([id, name]) => <li key={id}>
                        <SideItem $active={page === id} onClick={() => setPage(id)}>
                            <LabelsMark><Icon>{sideIcons[id]}</Icon>{id === "labels" && <b>abc</b>}</LabelsMark>
                            {name}
                        </SideItem>
                    </li>)}
                </SideList>
            </SideBar>
            <Content>
                <Group>
                    <legend><Caret $s={4} />Layer rendering</legend>
                    <GroupGrid>
                        <FieldLabel htmlFor="transparency">Layer transparency</FieldLabel>
                        <SliderCell>
                            <Slider id="transparency" type="range" min="0" max="100" defaultValue="0" />
                            <Spin>
                                <input type="number" defaultValue="0" aria-label="Transparency" />
                                <SpinButtons>
                                    <button aria-label="Up"><Caret /></button>
                                    <button aria-label="Down"><Caret /></button>
                                </SpinButtons>
                            </Spin>
                        </SliderCell>
                        <FieldLabel htmlFor="layer-blend">Layer blending mode</FieldLabel>
                        <Select id="layer-blend" value="Normal" />
                        <FeatureLabel htmlFor="feature-blend">Feature blending mode</FeatureLabel>
                        <Select id="feature-blend" value="Normal" />
                    </GroupGrid>
                </Group>
                <Row>
                    <RendererButton $w={115}>
                        <Spacer $w={3} />
                        <Icon size={14}>
                            <path d="M3 1h6v5H3z" fill="#e3c532" /><path d="M7 6h6v4H7zM3 10h6v4H3z" fill="#2d9c8d" />
                            <path d="M11 8h6v4h-6z" fill="#39a55a" /><path d="M9 14h8v4H9z" fill="#cb3434" />
                        </Icon>
                        <RendererName>Κατηγοριοποιημένα</RendererName>
                        <span><Caret /></span>
                    </RendererButton>
                </Row>
                <Row $mt={5}>
                    <FieldLabel htmlFor="column">Στήλη</FieldLabel>
                    <Select id="column" value="AS" $w={238} $white />
                    <Spacer $w={0} />
                    <Button $w={30} $h={21}><Epsilon>Ɛ</Epsilon>...</Button>
                </Row>
                <SymbolRow>
                    <FieldLabel htmlFor="symbol">Σύμβολο</FieldLabel>
                    <Button id="symbol" $w={223} $h={21}><Line $color="#ee8a80" />Αλλαγή...</Button>
                    <FieldLabel htmlFor="ramp">Κλίμακα χρώματος</FieldLabel>
                    <Select id="ramp" value="[source]" $h={18}><Ramp /></Select>
                    <Spacer $w={0} />
                    <StatusCheck><Check type="checkbox" />Invert</StatusCheck>
                </SymbolRow>
                <TableFrame>
                    <ClassTable>
                        <thead><tr>
                            <th><div>Σύμβολο<svg width="9" height="8"><path d="M1 1h7L5 7z" fill="#fff" stroke="#aaa" /></svg></div></th>
                            <th>Τιμή</th>
                            <th>Ετικέτα</th>
                        </tr></thead>
                        <tbody>
                            {classes.map(([color, name]) => <tr key={color}>
                                <td><Line $color={color} /></td><td>{name}</td><td>{name}</td>
                            </tr>)}
                        </tbody>
                    </ClassTable>
                </TableFrame>
                <Row $gap={8}>
                    <Button $w={60}>Ταξινόμηση</Button>
                    <Button $w={60}>Προσθήκη</Button>
                    <Button $w={60}>Διαγραφή</Button>
                    <Button $w={69}>Διαγραφή όλων</Button>
                    <Filler />
                    <Button $w={60} disabled>Συνένωση</Button>
                    <Button $w={99}>Προηγμένες επιλογές<Caret $s={2} /></Button>
                </Row>
                <Row $gap={8} $mt={6}>
                    <Button>Load Style ...</Button>
                    <Button>Save As Default</Button>
                    <Button>Restore Default Style</Button>
                    <MenuButton><span>Save Style</span><Caret $s={2} /></MenuButton>
                </Row>
                <Row $gap={8} $mt={6} $end>
                    <Button $w={60} $default>OK</Button>
                    <Button $w={60}>Cancel</Button>
                    <Button $w={60}>Apply</Button>
                    <Button $w={60}>Help</Button>
                </Row>
            </Content>
        </DialogBody>
    </Dialog>
}

export default function App() {
    return <Window>
        <GlobalStyle />
        <TitleBar>
            <QLogo size={12} />
            <WindowTitle>QGIS 2.2.0-Valmiera - ILPAP_V2</WindowTitle>
            <GhostTitle />
            <WindowButtons>
                <WindowButton aria-label="Minimize"><svg width="10" height="10"><path d="M0 7h9v3H0z" fill="#fff" stroke="#456" strokeWidth=".5" /></svg></WindowButton>
                <WindowButton aria-label="Maximize"><svg width="10" height="9"><path d="M1 1h8v7H1zM4 4h2v1H4z" fill="none" stroke="#fff" strokeWidth="1.500" /></svg></WindowButton>
                <WindowButton $wide aria-label="Close"><svg width="10" height="9"><path d="M1 1l8 7M9 1L1 8" stroke="#fff" strokeWidth="2.500" /></svg></WindowButton>
            </WindowButtons>
        </TitleBar>
        <MenuBar>
            {menus.map((name, i) => <MenuItem key={i}>{name}</MenuItem>)}
        </MenuBar>
        <ToolBar>
            {mainTools.map((tool, i) => {
                if (typeof tool === "number") return <Spacer key={i} $w={tool} />
                if (tool === "grip") return <Grip key={i} />
                if (tool === "caret") return <Caret key={i} />
                return <ToolButton key={i} $pressed={tool === "touch"} aria-label={tool}><Icon size={18}>{fileIcons[tool]}</Icon></ToolButton>
            })}
        </ToolBar>
        <ToolBar>
            {["pens", "pencil", "saveEdit", "feature"].map(id => <ToolButton key={id} aria-label={id}><Icon size={18}>{greyIcons[id]}</Icon></ToolButton>)}
        </ToolBar>
        <ToolBar>
            {["undo", "redo", "blob", "rings"].map(id => <ToolButton key={id} aria-label={id}><Icon size={18}>{greyIcons[id]}</Icon></ToolButton>)}
        </ToolBar>
        <Workspace>
            <LayerTools>
                <HandleRow />
                <LayerToolGrid>
                    {Object.entries(layerIcons).map(([id, art]) => <LayerTool key={id} aria-label={id}>
                        {id === "newLayer" && <Spacer $w={3} />}
                        <Icon>{art}</Icon>
                        {id === "newLayer" && <Caret />}
                    </LayerTool>)}
                </LayerToolGrid>
                <More aria-label="More layer tools">»</More>
                <HandleRow $m="4px 4px 3px" />
                <Icon>
                    <path d="M10 0v7M10 13v7M0 10h7M13 10h7" stroke="#8d4a47" />
                    <path d="M7 7h6v6H7z" stroke="#b46b66" strokeDasharray="2 1" />
                </Icon>
                <More aria-label="More tools">»</More>
            </LayerTools>
            <Docks>
                <HandleRow $m="0 4px 7px" />
                <LayerTree>
                    <TreeRow $leaf><Spacer $w={5} /><Line $color="#c44" /></TreeRow>
                    <TreeLayer name="Εναέρι" color="#999" />
                    <TreeRow $leaf><Spacer $w={5} /><Line $color="#666" $dashed /></TreeRow>
                    <TreeLayer name="Γραμμ" color="#7c93ab" active />
                    <TreeRow $leaf><Spacer $w={5} /><Line $color="#e33" />ΑΤΤΙΚ</TreeRow>
                    <TreeRow $leaf><Spacer $w={5} /><Line $color="#3d3" />Ν.ΦΙΛ</TreeRow>
                </LayerTree>
                <HandleRow $m="9px 4px 7px" />
                <OrderList>
                    {order.map(([name, on]) => <li key={name}>
                        <OrderLabel><Check type="checkbox" disabled defaultChecked={on} />{name}</OrderLabel>
                    </li>)}
                </OrderList>
                <ControlLabel><Check type="checkbox" />Control rendering</ControlLabel>
                <Tabs><Tab $active>Layer order</Tab><Tab>Επίπεδα</Tab></Tabs>
                <HandleRow $m="9px 4px 0" />
                <Fields>
                    <label htmlFor="start">Start</label>
                    <TextField id="start" />
                    <label htmlFor="stop">Stop</label>
                    <TextField id="stop" />
                </Fields>
            </Docks>
            <MapFrame><StreetMap /></MapFrame>
        </Workspace>
        <StatusBar>
            <StatusButton $w={17} aria-label="Toggle extents"><Icon size={14}><path d="M3 3q4-3 6 1l3 4q2 4-2 5-3 0-5-5M9 8q5-2 7 3 1 6-4 6-3 0-5-4M2 7l6 9" stroke="#222" strokeWidth="2" /></Icon></StatusButton>
            <StatusBox $w={65}>Συντεταγμένη:</StatusBox>
            <CoordField defaultValue="2624952,4577828" aria-label="Συντεταγμένη" />
            <StatusBox $w={39}>Κλίμακα</StatusBox>
            <Select id="scale" value="1:129.619" $w={72} $h={17} $white />
            <StatusButton $w={17} aria-label="Stop rendering"><Icon size={14}><path d="M6 17L18 3l1 5-8 10z" fill="#b9b4a9" stroke="#777" /><circle cx="7" cy="7" r="5.500" fill="#fff" stroke="#d4403c" strokeWidth="2" /><path d="M3 3l8 8" stroke="#d4403c" strokeWidth="2" /></Icon></StatusButton>
            <StatusBox $w={136}><StatusCheck><Check type="checkbox" defaultChecked />Διαδικασία σχεδίασης χάρτη</StatusCheck></StatusBox>
            <StatusBox $w={49}>EPSG:3857</StatusBox>
            <StatusButton $w={18} aria-label="CRS status"><Icon size={14}><circle cx="10" cy="10" r="6" stroke="#333" strokeWidth="3" /><path d="M10 0v5M10 15v5M0 10h5M15 10h5" stroke="#333" strokeWidth="3" /></Icon></StatusButton>
        </StatusBar>
        <TaskBar>
            <StartOrb aria-label="Start">
                <svg width="30" height="30" viewBox="0 0 30 30">
                    <circle cx="15" cy="15" r="14" fill="#2f6f9e" stroke="#9fc3dc" />
                    <path d="M2 11a14 14 0 0 1 26 0q-13 6-26 0z" fill="#a9cbe0" opacity=".7" />
                    <path d="M8 9q3-2 6 0l-1 6q-3-2-6 0z" fill="#ee6a32" /><path d="M15 9q3 2 7 0l-1 6q-3 2-7 0z" fill="#92c83e" />
                    <path d="M7 16q3-2 6 0l-1 6q-3-2-6 0z" fill="#5ab0e8" /><path d="M14 16q3 2 7 0l-1 6q-3 2-7 0z" fill="#fbcb3a" />
                </svg>
            </StartOrb>
            <TaskGrip />
            {tasks.map(([id, open]) => <TaskButton key={id} $open={open} aria-label={id}>
                {id === "qgis" ? <QLogo size={13} /> : <Icon size={14}>{trayIcons[id]}</Icon>}
            </TaskButton>)}
            <Tray>
                <span>EL</span>
                <Spacer $w={0} />
                <svg width="6" height="4"><path d="M0 4l3-4 3 4z" fill="#fff" /></svg>
                <Spacer $w={0} />
                <svg width="8" height="11"><path d="M0 4h2l4-4v11L2 7H0z" fill="#fff" /></svg>
                <svg width="12" height="11"><path d="M1 0v11" stroke="#fff" strokeWidth="1.500" /><path d="M3 1h4l1 1h4l-2 4H7L6 5H3z" fill="#fff" /></svg>
                <svg width="9" height="12"><path d="M1 2h7v9H1zM3 0h3v2H3z" fill="none" stroke="#fff" /><path d="M3 4h3v6H3z" fill="#fff" /></svg>
                <svg width="11" height="10"><path d="M1 10V8M3 10V7M6 10V5M8 10V3M10 10V0" stroke="#fff" strokeWidth="1.500" /></svg>
                <Icon size={12}><path d="M5 1l5 4-5 3-4-3zM15 1l4 4-4 3-5-3zM5 8l5 4-4 3-5-4zM10 12l4 3-4 3-4-3z" fill="#fff" /><circle cx="13" cy="14" r="6" fill="#43a143" /><path d="M10 14l2 2 4-4" stroke="#fff" strokeWidth="1.500" /></Icon>
                <Clock>6:26 μμ</Clock>
                <ShowDesktop aria-label="Show desktop" />
            </Tray>
        </TaskBar>
        <UndoDock>
            <DockTitle>Αναίρεση/Επανα</DockTitle>
            <UndoList><li>&lt;empty&gt;</li></UndoList>
        </UndoDock>
        <LayerProperties />
    </Window>
}
